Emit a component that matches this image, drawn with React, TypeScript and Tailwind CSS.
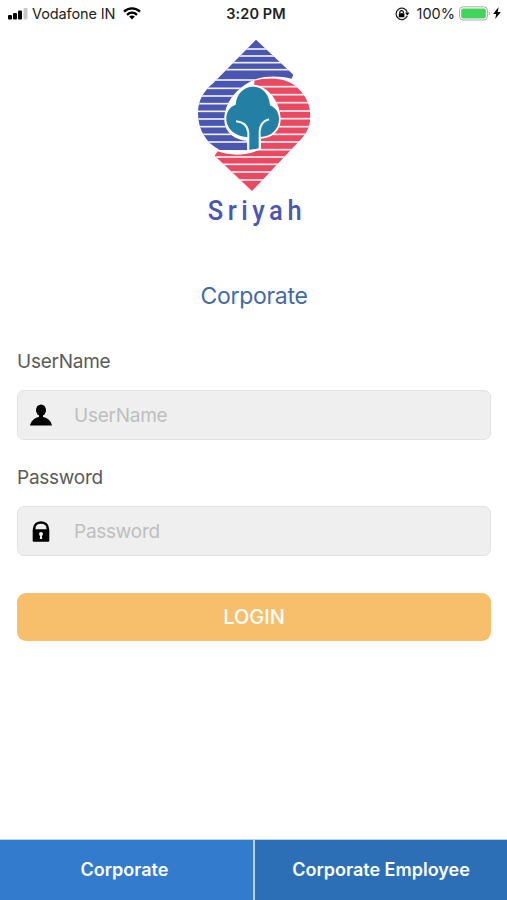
import { useState } from 'react';

interface FieldProps {
  label: string;
  type: string;
  value: string;
  onChange: (value: string) => void;
  icon: React.ReactNode;
}

const BLUE_LINES = [39, 60, 80, 101, 132, 157, 180, 203, 226, 249, 272, 295, 318];
const RED_LINES = [152, 176, 200, 225, 248, 272, 295, 318, 341, 363, 385, 408, 432];

function Logo() {
  return (
    <svg className="w-[120px] h-[158px]" viewBox="0 0 360 474">
      <defs>
        <clipPath id="blue">
          <path d="M183 11 L295 116 L290 128 C258 120 218 118 186 128 C140 144 88 190 88 250 C88 290 118 311 156 315 L156 343 L74 342 C34 322 9 282 9 232 C9 195 24 167 55 141 Z" />
        </clipPath>
        <clipPath id="red">
          <path d="M178 134 C220 122 268 126 296 146 C328 170 346 202 346 238 C346 264 340 285 322 305 L171 465 L59 359 L68 346 C112 362 160 358 198 339 L198 306 C230 306 256 284 256 244 C256 204 226 154 178 146 Z" />
        </clipPath>
      </defs>

      <g clipPath="url(#blue)">
        <rect width="360" height="474" fill="#4a56b0" />
        {BLUE_LINES.map((y) => (
          <rect key={y} y={y - 2.5} width="360" height="5" fill="#eef0ff" />
        ))}
      </g>
      <g clipPath="url(#red)">
        <rect width="360" height="474" fill="#ea4961" />
        {RED_LINES.map((y) => (
          <rect key={y} y={y - 2.5} width="360" height="5" fill="#fff0f2" />
        ))}
      </g>

      {/* Árvore */}
      <path
        d="M174 152 C146 152 124 174 122 206 C104 212 94 228 94 248 C94 280 124 303 161 303 L161 342 L193 337 L193 303 C228 304 252 280 252 250 C252 230 242 215 225 208 C223 174 202 152 174 152 Z"
        fill="#237fa4"
        stroke="#fff"
        strokeWidth="10"
        paintOrder="stroke"
      />
      <path
        d="M123 256 C145 258 158 270 160 290 L160 344 M222 250 C204 255 195 268 194 286 L194 338"
        fill="none"
        stroke="#e8fbff"
        strokeWidth="6"
      />
    </svg>
  );
}

function UserIcon() {
  return (
    <svg className="w-6 h-6" viewBox="0 0 24 24">
      <ellipse cx="12" cy="7.2" rx="5" ry="5.8" />
      <rect x="10" y="11" width="4" height="5" />
      <path d="M1 22.5 C2.5 17 6 14.2 12 13.8 C18 14.2 21.5 17 23 22.5 Z" />
    </svg>
  );
}

function LockIcon() {
  return (
    <svg className="w-6 h-6" viewBox="0 0 24 24">
      <path d="M5.2 11 V9.5 C5.2 1.4 18.8 1.4 18.8 9.5 V11" fill="none" stroke="#000" strokeWidth="2.6" />
      <rect x="3.7" y="10.3" width="16.6" height="12.4" rx="1" />
      <circle cx="12" cy="15" r="2" fill="#efefef" />
      <path d="M11.2 15 H12.8 L13.2 20 H10.8 Z" fill="#efefef" />
    </svg>
  );
}

function StatusBar() {
  return (
    <header className="h-7 grid grid-cols-3 items-center pl-2 pr-1.5 text-[14.5px] text-[#222]">
      <div className="flex items-center">
        <svg className="w-5 h-3 mr-1" viewBox="0 0 20 12">
          <rect x="0" y="7" width="4" height="4.5" rx="1" />
          <rect x="5" y="5" width="4" height="6.5" rx="1" />
          <rect x="10" y="2.5" width="4" height="9" rx="1" />
          <rect x="15.5" y="0" width="4" height="11.5" rx="1" fill="#c9c9c9" />
        </svg>
        <span className="whitespace-nowrap tracking-[-0.1px]">Vodafone IN</span>
        <svg className="w-[18px] h-[13px] ml-2 mb-0.5" viewBox="0 0 18 13" fill="none" stroke="#000" strokeWidth="2.3">
          <path d="M1 4.6 C5.5 0.2 12.5 0.2 17 4.6" />
          <path d="M4 7.8 C7 5 11 5 14 7.8" />
          <path d="M6.2 9.6 C7.8 8.2 10.2 8.2 11.8 9.6 L9 12.5 Z" fill="#000" stroke="none" />
        </svg>
      </div>
      <span className="pl-[3px] text-center font-semibold tracking-[0.1px]">3:20 PM</span>
      <div className="flex items-center justify-end">
        <svg className="w-[15px] h-[14px] mr-[7px]" viewBox="0 0 15 14">
          <path d="M12.2 8.8 A5.7 5.7 0 1 1 12.2 5" fill="none" stroke="#222" strokeWidth="1.3" />
          <path d="M10 5.6 H14.4 L12.3 8.6 Z" />
          <rect x="3.8" y="6.2" width="5.6" height="4" rx="0.5" />
          <path d="M4.8 6.5 V5.3 C4.8 3 8.4 3 8.4 5.3 V6.5" fill="none" stroke="#000" strokeWidth="1.1" />
        </svg>
        <span>100%</span>
        <svg className="w-8 h-[15px] ml-1 mb-0.5" viewBox="0 0 32 15">
          <rect x="0.6" y="0.8" width="27.8" height="13.2" rx="3.5" fill="#fff" stroke="#aaa" strokeWidth="1" />
          <rect x="2.2" y="2.4" width="24.6" height="10" rx="2" fill="#42d55c" />
          <path d="M29.8 5.2 C31.4 6 31.4 8.8 29.8 9.6 Z" fill="#aaa" />
        </svg>
        <svg className="w-2 h-3 ml-0.5 mb-0.5" viewBox="0 0 8 12">
          <path d="M5.6 0 L0.2 6.9 H3.2 L2.2 12 L7.8 4.9 H4.7 Z" />
        </svg>
      </div>
    </header>
  );
}

function Field({ label, type, value, onChange, icon }: FieldProps) {
  return (
    <label className="block">
      <span className="block h-[42px] pt-[1.5px] text-[19px] leading-6 tracking-[-0.25px] text-[#5a5a5a]">{label}</span>
      <div className="h-[50px] flex items-center gap-[21px] pl-[11px] bg-[#efefef] border border-[#e2e2e2] rounded-[7px]">
        {icon}
        <input
          type={type}
          value={value}
          onChange={(e) => onChange(e.target.value)}
          placeholder={label}
          className="flex-1 min-w-0 pt-0.5 bg-transparent outline-none text-[19px] tracking-[-0.25px] placeholder:text-[#bebebe]"
        />
      </div>
    </label>
  );
}

export default function App() {
  const [username, setUsername] = useState('');
  const [password, setPassword] = useState('');

  return (
    <div className="h-[900px] w-full bg-white flex flex-col font-[Inter,sans-serif] overflow-hidden">
      <StatusBar />

      <main className="flex-1 flex flex-col pl-[17px] pr-4">
        <div className="flex flex-col items-center pt-2 pl-0.5">
          <Logo />
          <span className="h-9 pl-1 pt-px font-[Roboto,sans-serif] font-medium text-[28px] leading-8 tracking-[5px] text-[#4a56b0] scale-x-[0.91]">
            Sriyah
          </span>
        </div>

        <h1 className="mt-[50px] text-center text-[23px] leading-8 tracking-[-0.3px] text-[#4469a4]">Corporate</h1>

        <form className="mt-9 flex flex-col" onSubmit={(e) => e.preventDefault()}>
          <div className="space-y-6">
            <Field label="UserName" type="text" value={username} onChange={setUsername} icon={<UserIcon />} />
            <Field label="Password" type="password" value={password} onChange={setPassword} icon={<LockIcon />} />
          </div>
          <button type="submit" className="mt-[37px] h-[48px] rounded-[9px] bg-[#f7bf6b] text-white text-[20px] font-medium">
            LOGIN
          </button>
        </form>
      </main>

      {/* Abas */}
      <nav className="h-[61px] grid grid-cols-[253px_1fr] gap-[2px] pt-px bg-[#b8d3ee] text-white text-[18px] font-semibold">
        <button className="pr-1 pb-0.5 bg-[#327bcd]">Corporate</button>
        <button className="pb-0.5 bg-[#2c6fb7]">Corporate Employee</button>
      </nav>
    </div>
  );
}
